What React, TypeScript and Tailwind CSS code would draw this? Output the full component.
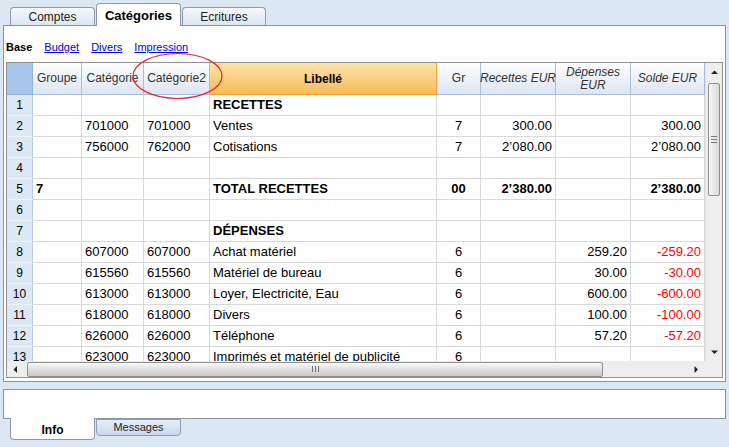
import React from 'react';

interface Row {
  g?: string;
  c1?: string;
  c2?: string;
  lib?: string;
  gr?: string;
  rec?: string;
  dep?: string;
  sol?: string;
  bold?: boolean;
  neg?: boolean;
}

const rows: Row[] = [
  { lib: 'RECETTES', bold: true },
  { c1: '701000', c2: '701000', lib: 'Ventes', gr: '7', rec: '300.00', sol: '300.00' },
  { c1: '756000', c2: '762000', lib: 'Cotisations', gr: '7', rec: '2’080.00', sol: '2’080.00' },
  {},
  { g: '7', lib: 'TOTAL RECETTES', gr: '00', rec: '2’380.00', sol: '2’380.00', bold: true },
  {},
  { lib: 'DÉPENSES', bold: true },
  { c1: '607000', c2: '607000', lib: 'Achat matériel', gr: '6', dep: '259.20', sol: '-259.20', neg: true },
  { c1: '615560', c2: '615560', lib: 'Matériel de bureau', gr: '6', dep: '30.00', sol: '-30.00', neg: true },
  { c1: '613000', c2: '613000', lib: 'Loyer, Electricité, Eau', gr: '6', dep: '600.00', sol: '-600.00', neg: true },
  { c1: '618000', c2: '618000', lib: 'Divers', gr: '6', dep: '100.00', sol: '-100.00', neg: true },
  { c1: '626000', c2: '626000', lib: 'Téléphone', gr: '6', dep: '57.20', sol: '-57.20', neg: true },
  { c1: '623000', c2: '623000', lib: 'Imprimés et matériel de publicité', gr: '6' },
];

const COLS = 'grid grid-cols-[26px_49px_62px_66px_227px_44px_75px_75px_74px]';
const cell = 'flex items-center border-r border-b border-[#d9d9d9] px-[3px] whitespace-nowrap overflow-hidden';

function Arrow({ dir }: { dir: 'up' | 'down' | 'left' | 'right' }) {
  const pts = {
    up: '0,4 3.5,0.5 7,4',
    down: '0,0.5 3.5,4 7,0.5',
    left: '4,0 0.5,3.5 4,7',
    right: '0.5,0 4,3.5 0.5,7',
  }[dir];
  const vertical = dir === 'up' || dir === 'down';
  return (
    <svg width={vertical ? 7 : 5} height={vertical ? 5 : 7} viewBox={vertical ? '0 0 7 5' : '0 0 5 7'}>
      <polygon points={pts} fill="#222" />
    </svg>
  );
}

function HeaderCell({ children, className = '' }: { children?: React.ReactNode; className?: string }) {
  return (
    <div
      className={`flex items-center justify-center text-center whitespace-nowrap border-r border-b border-[#a9bdd6] bg-linear-to-b from-white to-[#dce5f2] text-[12px] text-[#333] leading-[13px] ${className}`}
    >
      {children}
    </div>
  );
}

function GridRow({ n, r }: { n: number; r: Row }) {
  const b = r.bold ? 'font-bold' : '';
  return (
    <div className={`${COLS} h-[21px] text-[13px] text-black`}>
      <div className="flex items-center justify-center bg-[#dde8f5] border-r border-[#b9cce3] border-b border-b-[#eef3fa] text-[12px] font-['Liberation_Sans_Narrow','Liberation_Sans',Arial,sans-serif]">
        {n}
      </div>
      <div className={`${cell} ${b}`}>{r.g}</div>
      <div className={cell}>{r.c1}</div>
      <div className={cell}>{r.c2}</div>
      <div className={`${cell} ${b}`}>{r.lib}</div>
      <div className={`${cell} justify-center ${b}`}>{r.gr}</div>
      <div className={`${cell} justify-end ${b}`}>{r.rec}</div>
      <div className={`${cell} justify-end ${b}`}>{r.dep}</div>
      <div className={`${cell} justify-end ${b} ${r.neg ? 'text-[#ff0000]' : ''}`}>{r.sol}</div>
    </div>
  );
}

export default function App() {
  return (
    <div className="relative w-[729px] h-[447px] overflow-hidden bg-[#dce7f4] font-['Liberation_Sans',Arial,sans-serif]">
      {/* Top tabs */}
      <div className="flex items-end h-[25px] pl-[10px] gap-px">
        <div className="flex items-center justify-center w-[85px] h-[18px] rounded-t-[4px] border border-b-0 border-[#8d99a8] bg-linear-to-b from-[#f7f9fc] to-[#dbe5f2] text-[12px] text-[#222]">
          Comptes
        </div>
        <div className="relative z-10 -mb-px flex items-start justify-center pt-[2px] w-[85px] h-[23px] rounded-t-[4px] border border-b-0 border-[#8d99a8] bg-white text-[13px] font-bold text-black">
          Catégories
        </div>
        <div className="flex items-center justify-center w-[84px] h-[18px] rounded-t-[4px] border border-b-0 border-[#8d99a8] bg-linear-to-b from-[#f7f9fc] to-[#dbe5f2] text-[12px] text-[#222]">
          Ecritures
        </div>
      </div>

      {/* Main panel */}
      <div className="ml-[3px] w-[723px] h-[357px] border border-[#8a939e] bg-white">
        <div className="flex items-center h-[36px] pt-[6px] pl-[2px] gap-[12px] text-[11px]">
          <span className="font-bold text-black">Base</span>
          <span className="text-[#0000ee] underline">Budget</span>
          <span className="text-[#0000ee] underline">Divers</span>
          <span className="text-[#0000ee] underline">Impression</span>
        </div>

        <div className="ml-[2px] w-[717px] h-[316px] border border-[#8f8f8f] flex flex-col">
          <div className="flex h-[298px]">
            <div className="w-[698px] overflow-hidden">
              {/* Header */}
              <div className={`${COLS} h-[32px]`}>
                <div className="bg-[#a8c5ea] border-r border-b border-[#93b1da]" />
                <HeaderCell>Groupe</HeaderCell>
                <HeaderCell>Catégorie</HeaderCell>
                <HeaderCell>Catégorie2</HeaderCell>
                <div className="flex items-center justify-center border-r border-b border-[#f0a23a] bg-linear-to-b from-[#fce4a8] to-[#f6bb55] text-[12px] font-bold text-black">
                  Libellé
                </div>
                <HeaderCell>Gr</HeaderCell>
                <HeaderCell className="italic text-[10.5px] text-[#6e6e6e]">Recettes EUR</HeaderCell>
                <HeaderCell className="italic text-[10.5px] text-[#6e6e6e]">
                  Dépenses
                  <br />
                  EUR
                </HeaderCell>
                <HeaderCell className="italic text-[10.5px] text-[#6e6e6e]">Solde EUR</HeaderCell>
              </div>
              {/* Body */}
              <div className="h-[266px] overflow-hidden">
                {rows.map((r, i) => (
                  <GridRow key={i} n={i + 1} r={r} />
                ))}
              </div>
            </div>

            {/* Vertical scrollbar */}
            <div className="w-[17px] flex flex-col bg-[#eeeeee] border-l border-[#e2e2e2]">
              <div className="h-[18px] flex items-center justify-center">
                <Arrow dir="up" />
              </div>
              <div className="mx-[2px] mt-[2px] h-[113px] rounded-[2px] border border-[#8f8f8f] bg-linear-to-r from-[#f8f8f8] to-[#d9d9d9] flex flex-col items-center justify-center gap-[2px]">
                <div className="w-[6px] h-px bg-[#7a7a7a]" />
                <div className="w-[6px] h-px bg-[#7a7a7a]" />
                <div className="w-[6px] h-px bg-[#7a7a7a]" />
              </div>
              <div className="flex-1" />
              <div className="h-[17px] flex items-center justify-center">
                <Arrow dir="down" />
              </div>
            </div>
          </div>

          {/* Horizontal scrollbar */}
          <div className="flex h-[16px]">
            <div className="w-[698px] flex items-center bg-[#eeeeee]">
              <div className="w-[17px] h-full flex items-center justify-center">
                <Arrow dir="left" />
              </div>
              <div className="ml-[3px] w-[576px] h-[15px] rounded-[2px] border border-[#8f8f8f] bg-linear-to-b from-[#f9f9f9] to-[#c8c8c8] flex items-center justify-center gap-[2px]">
                <div className="w-px h-[6px] bg-[#6f6f6f]" />
                <div className="w-px h-[6px] bg-[#6f6f6f]" />
                <div className="w-px h-[6px] bg-[#6f6f6f]" />
              </div>
              <div className="flex-1" />
              <div className="w-[17px] h-full flex items-center justify-center">
                <Arrow dir="right" />
              </div>
            </div>
            <div className="w-[17px] bg-[#eeeeee]" />
          </div>
        </div>
      </div>

      {/* Bottom info box */}
      <div className="ml-[3px] mt-[7px] w-[723px] h-[30px] border border-[#8a939e] bg-white" />
      <div className="flex items-start pl-[10px] gap-px">
        <div className="relative z-10 -mt-px flex items-center justify-center pt-[2px] w-[85px] h-[22px] rounded-b-[4px] border border-t-0 border-[#8d99a8] bg-white text-[12px] font-bold text-black">
          Info
        </div>
        <div className="flex items-center justify-center w-[85px] h-[17px] rounded-b-[4px] border border-[#8d9bb8] bg-linear-to-b from-[#e6eefa] to-[#c9d8f0] text-[11px] text-[#222]">
          Messages
        </div>
      </div>

      {/* Annotation ellipse */}
      <svg className="absolute left-0 top-0 pointer-events-none" width="729" height="447">
        <ellipse cx="177.5" cy="76" rx="44.5" ry="22.5" fill="none" stroke="#e8262a" strokeWidth="1.2" />
      </svg>
    </div>
  );
}
